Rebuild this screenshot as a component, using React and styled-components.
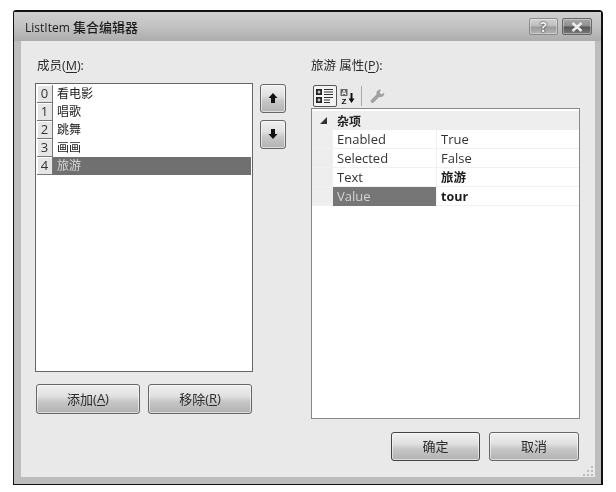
import React from 'react';
import styled, {createGlobalStyle} from 'styled-components';

const GlobalStyle = createGlobalStyle`
  html, body {
    margin: 0;
    padding: 0;
    background: #fff;
  }
  body {
    width: 616px;
    height: 492px;
    overflow: hidden;
    font-family: "Open Sans", "Noto Sans CJK SC", sans-serif;
    font-size: 12px;
    color: #222;
  }
`;

const Page = styled.div`
  padding: 10px 0 0 13px;
`;

const Window = styled.div`
  position: relative;
  box-sizing: border-box;
  width: 590px;
  height: 475px;
  display: flex;
  flex-direction: column;
  background: #bdbdbd;
  border: 1px solid #111;
  border-top-width: 2px;
  border-right-width: 2px;
  border-radius: 3px 4px 0 0;
  filter: blur(.35px);
`;

const TitleBar = styled.div`
  height: 29px;
  flex: none;
  display: flex;
  align-items: center;
  padding: 0 9px 0 11px;
  background: linear-gradient(#cfcfcf, #c4c4c4 45%, #acacac);
`;

const Title = styled.div`
  flex: 1;
  font-size: 12px;
  color: #1c1c1c;
  span {
    font-size: 13px;
    font-weight: 500;
  }
`;

const CaptionButton = styled.div`
  box-sizing: border-box;
  height: 17px;
  width: ${props => props.$wide ? 30 : 29}px;
  margin-left: ${props => props.$wide ? 4 : 0}px;
  display: flex;
  align-items: center;
  justify-content: center;
  border: 1px solid ${props => props.$wide ? '#666' : '#8a8a8a'};
  border-radius: 2px;
  background: ${props => props.$wide
    ? 'linear-gradient(#a8a8a8, #8e8e8e 48%, #555 52%, #7c7c7c)'
    : 'linear-gradient(#d2d2d2, #bcbcbc 48%, #9a9a9a 52%, #b4b4b4)'};
  box-shadow: inset 0 0 0 1px rgba(255, 255, 255, .35);
  color: #f4f4f4;
  font-size: 14px;
  font-weight: 700;
  line-height: 1;
  text-shadow: 0 0 2px #333, 0 0 1px #333;
`;

const Client = styled.div`
  flex: 1;
  margin: 0 6px 7px 7px;
  padding-top: 16px;
  display: flex;
  background: #e9e9e9;
`;

const Pane = styled.div`
  width: ${props => props.$width}px;
  margin-left: ${props => props.$left}px;
  display: flex;
  flex-direction: column;
`;

const Label = styled.div`
  height: 18px;
  padding-left: ${props => props.$indent || 0}px;
  line-height: 18px;
  font-size: 12.5px;
  color: #2a2a2a;
  white-space: nowrap;
  u {
    text-underline-offset: 2px;
  }
`;

const MemberList = styled.div`
  box-sizing: border-box;
  height: 289px;
  margin-top: 8px;
  padding: 1px;
  background: #fff;
  border: 1px solid #666;
`;

const MemberRow = styled.div`
  height: 18px;
  display: flex;
`;

const MemberIndex = styled.div`
  box-sizing: border-box;
  width: 16px;
  flex: none;
  text-align: center;
  line-height: 17px;
  font-size: 13px;
  color: #333;
  background: #e6e6e6;
  border-right: 1px solid #777;
  border-bottom: 1px solid #777;
  box-shadow: inset 1px 1px 0 #fff;
`;

const MemberText = styled.div`
  flex: 1;
  padding-left: 4px;
  line-height: 18px;
  font-size: 12px;
  background: ${props => props.$selected ? '#707070' : 'transparent'};
  color: ${props => props.$selected ? '#d8d8d8' : '#222'};
`;

const ListActions = styled.div`
  display: flex;
  gap: 8px;
  margin-top: 12px;
  padding-left: 1px;
`;

const Button = styled.div`
  box-sizing: border-box;
  width: ${props => props.$width}px;
  height: ${props => props.$height || 30}px;
  padding-bottom: 2px;
  display: flex;
  align-items: center;
  justify-content: center;
  border: 1px solid ${props => props.$primary ? '#444' : '#666'};
  border-radius: 3px;
  background: linear-gradient(#f0f0f0, #e0e0e0 40%, #c6c6c6 60%, #b2b2b2);
  box-shadow: inset 0 0 0 1px rgba(255, 255, 255, .55);
  font-size: 13px;
  color: #2a2a2a;
  u {
    text-underline-offset: 2px;
  }
`;

const MoveButtons = styled.div`
  display: flex;
  flex-direction: column;
  gap: 7px;
  padding-top: 27px;
`;

const Toolbar = styled.div`
  height: 24px;
  margin-top: 9px;
  display: flex;
  align-items: center;
  padding-left: 2px;
  box-sizing: border-box;
`;

const ToolButton = styled.div`
  box-sizing: border-box;
  width: ${props => props.$active ? 24 : 20}px;
  height: 22px;
  display: flex;
  align-items: center;
  justify-content: center;
  border: ${props => props.$active ? '1px solid #555' : '1px solid transparent'};
  border-radius: 2px;
  background: ${props => props.$active ? '#f2f2f2' : 'transparent'};
`;

const ToolDivider = styled.div`
  width: 1px;
  height: 20px;
  margin: 0 6px 0 4px;
  background: #aaa;
`;

const PropertyGrid = styled.div`
  box-sizing: border-box;
  height: 311px;
  padding-top: 2px;
  background: #fff;
  border: 1px solid #888;
`;

const CategoryRow = styled.div`
  height: 19px;
  display: flex;
  align-items: center;
  background: #eeeeee;
  font-size: 12px;
  font-weight: 700;
  color: #222;
`;

const Expander = styled.div`
  width: 25px;
  flex: none;
  display: flex;
  justify-content: center;
  padding-right: 2px;
  box-sizing: border-box;
`;

const PropertyRow = styled.div`
  height: 19px;
  display: flex;
  background: linear-gradient(90deg, #eeeeee 21px, #fff 21px);
  box-shadow: inset 0 -1px 0 #f1f1f1;
`;

const PropertyName = styled.div`
  box-sizing: border-box;
  width: 104px;
  margin-left: 21px;
  padding-left: 4px;
  line-height: 19px;
  font-size: 13px;
  background: ${props => props.$selected ? '#767676' : 'transparent'};
  color: ${props => props.$selected ? '#d4d4d4' : '#333'};
  border-right: 1px solid #f1f1f1;
`;

const PropertyValue = styled.div`
  flex: 1;
  padding-left: 4px;
  line-height: 19px;
  font-size: ${props => props.$bold ? 12.5 : 13}px;
  font-weight: ${props => props.$bold ? 700 : 400};
  color: ${props => props.$bold ? '#1c1c1c' : '#333'};
`;

const Footer = styled.div`
  display: flex;
  justify-content: flex-end;
  gap: 9px;
  margin-top: 13px;
  margin-right: 1px;
`;

const ResizeGrip = styled.svg`
  position: absolute;
  right: 7px;
  bottom: 7px;
`;

const ArrowIcon = ({down}) => (
  <svg width="12" height="12" viewBox="0 0 12 12">
    <path
      d="M6 1 L10.5 6 H8 V11 H4 V6 H1.5 Z"
      fill="#111"
      transform={down ? 'rotate(180 6 6)' : undefined}
    />
  </svg>
);

const CategorizedIcon = () => (
  <svg width="20" height="18" viewBox="0 0 20 18" fill="none">
    <rect x="1" y="2" width="6" height="6" fill="#222" />
    <rect x="1" y="10" width="6" height="6" fill="#222" />
    <path d="M2.5 5h3M4 3.5v3M2.5 13h3M4 11.500v3" stroke="#fff" />
    <path d="M9 2.500h9M9 5h9M9 7.500h9M9 10.500h9M9 13h6M9 15.500h6" stroke="#333" />
  </svg>
);

const SortIcon = () => (
  <svg width="15" height="17" viewBox="0 0 15 17" fill="none">
    <rect x="0.500" y="1" width="7" height="7" fill="#666" />
    <text x="4" y="7" fontSize="7" fontWeight="700" fill="#eee" textAnchor="middle" fontFamily="Liberation Sans, sans-serif">A</text>
    <text x="4" y="15.500" fontSize="8" fontWeight="700" fill="#111" textAnchor="middle" fontFamily="Liberation Sans, sans-serif">Z</text>
    <path d="M11.500 5v8" stroke="#111" strokeWidth="2" />
    <path d="M8.500 10.500h6l-3 4.500z" fill="#111" />
  </svg>
);

const WrenchIcon = () => (
  <svg width="18" height="18" viewBox="0 0 18 18">
    <path
      d="M13 2.500c-2.500-.4-4.800 1.500-4.600 4l.1 1L3.500 12.500c-1.100 1.100-1.100 2.300-.3 3 .8.700 2 .6 3-.4l5-5c3 .6 5.400-1.500 5-4.600l-2.200 1.800-1.800-.6-.4-1.800z"
      fill="#a0a0a0"
    />
  </svg>
);

const Collapse = () => (
  <svg width="7" height="7" viewBox="0 0 7 7">
    <path d="M7 0 V7 H0 Z" fill="#333" />
  </svg>
);

const members = ['看电影', '唱歌', '跳舞', '画画', '旅游'];

const properties = [
  {name: 'Enabled', value: 'True'},
  {name: 'Selected', value: 'False'},
  {name: 'Text', value: '旅游', bold: true},
  {name: 'Value', value: 'tour', bold: true, selected: true},
];

export default function App() {
  return (
    <Page>
      <GlobalStyle />
      <Window>
        <TitleBar>
          <Title>ListItem <span>集合编辑器</span></Title>
          <CaptionButton>?</CaptionButton>
          <CaptionButton $wide>
            <svg width="12" height="10" viewBox="0 0 12 10">
              <path d="M1.5 1 L10.5 9 M10.5 1 L1.5 9" stroke="#eee" strokeWidth="2.4" />
            </svg>
          </CaptionButton>
        </TitleBar>
        <Client>
          <Pane $width={218} $left={14}>
            <Label $indent={2}>成员(<u>M</u>):</Label>
            <MemberList>
              {members.map((member, i) => (
                <MemberRow key={member}>
                  <MemberIndex>{i}</MemberIndex>
                  <MemberText $selected={i === 4}>{member}</MemberText>
                </MemberRow>
              ))}
            </MemberList>
            <ListActions>
              <Button $width={104}>添加(<u>A</u>)</Button>
              <Button $width={104}>移除(<u>R</u>)</Button>
            </ListActions>
          </Pane>
          <Pane $width={26} $left={7}>
            <MoveButtons>
              <Button $width={26} $height={29}><ArrowIcon /></Button>
              <Button $width={26} $height={29}><ArrowIcon down /></Button>
            </MoveButtons>
          </Pane>
          <Pane $width={269} $left={25}>
            <Label>旅游 属性(<u>P</u>):</Label>
            <Toolbar>
              <ToolButton $active><CategorizedIcon /></ToolButton>
              <ToolButton><SortIcon /></ToolButton>
              <ToolDivider />
              <WrenchIcon />
            </Toolbar>
            <PropertyGrid>
              <CategoryRow>
                <Expander><Collapse /></Expander>
                杂项
              </CategoryRow>
              {properties.map(property => (
                <PropertyRow key={property.name}>
                  <PropertyName $selected={property.selected}>{property.name}</PropertyName>
                  <PropertyValue $bold={property.bold}>{property.value}</PropertyValue>
                </PropertyRow>
              ))}
            </PropertyGrid>
            <Footer>
              <Button $width={89} $height={29} $primary>确定</Button>
              <Button $width={90} $height={29}>取消</Button>
            </Footer>
          </Pane>
        </Client>
        <ResizeGrip width="12" height="12" viewBox="0 0 12 12">
          <path d="M9 1h2v2H9zM5 5h2v2H5zM9 5h2v2H9zM1 9h2v2H1zM5 9h2v2H5zM9 9h2v2H9z" fill="#bbb" />
        </ResizeGrip>
      </Window>
    </Page>
  );
}
